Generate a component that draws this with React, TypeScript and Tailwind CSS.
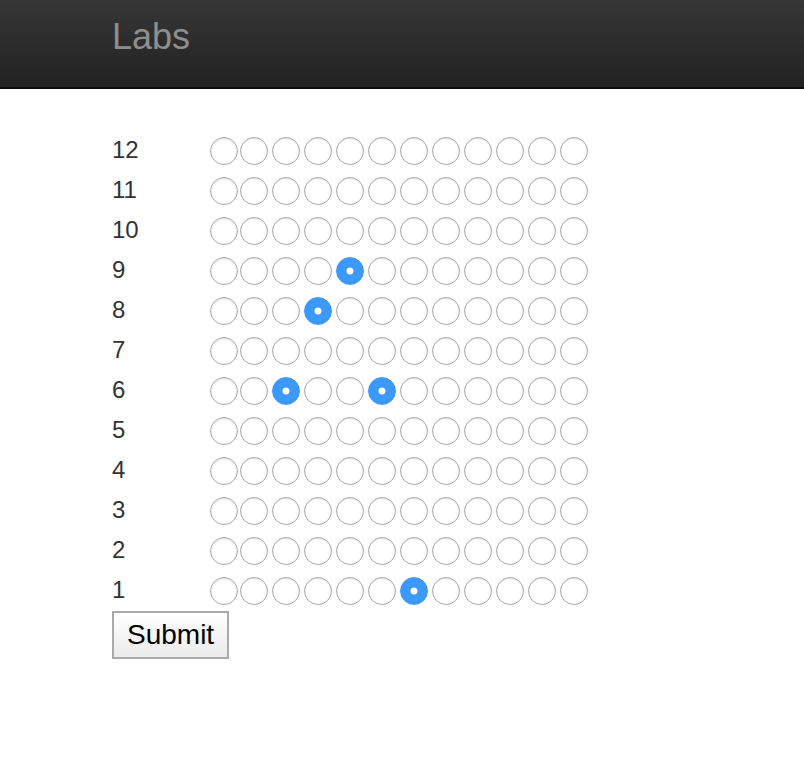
import React from 'react'

const selected: Record<number, number[]> = {
    9: [4],
    8: [3],
    6: [2, 5],
    1: [6],
}

const rows = [12, 11, 10, 9, 8, 7, 6, 5, 4, 3, 2, 1]
const cols = Array.from({ length: 12 }, (_, i) => i)

const App = () => {
    return (
        <div className="min-h-[762px] bg-white font-['Liberation_Sans',Arial,sans-serif]">
            <div className="h-[89px] bg-gradient-to-b from-[#373737] to-[#222222] border-b-2 border-[#0a0a0a]">
                <div className="pl-[112px] pt-[16px] text-[36px] leading-[42px] text-[#8e8e8e]">
                    Labs
                </div>
            </div>
            <form className="pl-[112px] pt-[42px]" onSubmit={(e) => e.preventDefault()}>
                {rows.map((r) => (
                    <div key={r} className="flex items-center h-[40px]">
                        <span className="w-[98px] text-[24px] leading-none text-[#333] -mt-[2px]">{r}</span>
                        <div className="flex items-center">
                            {cols.map((c) => (
                                <input
                                    key={c}
                                    type="radio"
                                    name={`col-${c}-${(selected[r] || []).includes(c) ? 'on' : r}`}
                                    defaultChecked={(selected[r] || []).includes(c)}
                                    className={`appearance-none m-0 w-[28px] h-[28px] rounded-full border border-[#a9a9a9] bg-white shadow-[inset_0_1px_2px_rgba(0,0,0,0.12)] checked:border-[#3b99fc] checked:shadow-none checked:bg-[radial-gradient(circle,#ffffff_3px,#3b99fc_4px)] ${c === 0 ? '' : c === 1 ? 'ml-[2px]' : 'ml-[4px]'}`}
                                />
                            ))}
                        </div>
                    </div>
                ))}
                <button
                    type="submit"
                    className="h-[48px] px-[13px] border-2 border-[#aaaaaa] bg-gradient-to-b from-white to-[#ebebeb] text-[28px] leading-none text-black"
                >
                    Submit
                </button>
            </form>
        </div>
    )
}

export default App
